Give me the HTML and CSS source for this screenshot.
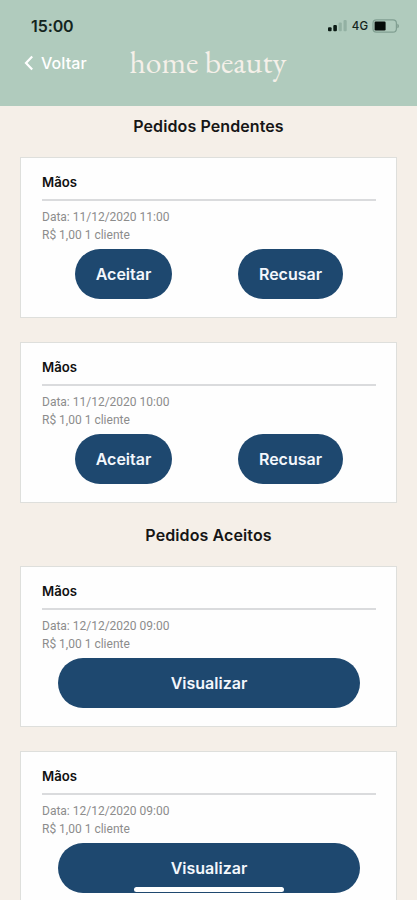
FILE: index.html
```html
<!DOCTYPE html>
<html lang="pt-BR">
<head>
<meta charset="utf-8">
<title>home beauty</title>
<link rel="stylesheet" href="styles.css">
</head>
<body>
<header class="header">
  <div class="status">
    <span class="time">15:00</span>
    <div class="indicators">
      <svg class="signal" width="20" height="12" viewBox="0 0 20 12"><rect x="0" y="7.3" width="3.6" height="3.9" rx="1" fill="#0b1a14"/><rect x="5.3" y="5" width="3.6" height="6.2" rx="1" fill="#0b1a14"/><rect x="10.6" y="2.6" width="3.2" height="8.6" rx="1" fill="#93b1a3"/><rect x="15.5" y="0" width="3.2" height="11.2" rx="1" fill="#93b1a3"/></svg>
      <span class="network">4G</span>
      <svg class="battery" width="28" height="14" viewBox="0 0 28 14"><rect x="1" y=".8" width="23.4" height="12.4" rx="3.4" fill="none" stroke="#809f91" stroke-width="1.2"/><rect x="2.6" y="2.6" width="11" height="8.8" rx="1.2" fill="#050b08"/><path d="M25.5 4.7c1.6.6 1.6 4 0 4.6z" fill="#6f8c7f"/></svg>
    </div>
  </div>
  <div class="nav">
    <a class="back"><svg width="10" height="16" viewBox="0 0 10 16"><path d="M8.2 1.4 2 8l6.2 6.6" fill="none" stroke="#fff" stroke-width="2.2"/></svg><span>Voltar</span></a>
    <span class="brand">home beauty</span>
  </div>
</header>
<main class="content">
  <h2 class="heading">Pedidos Pendentes</h2>
  <article class="card">
    <h3 class="title">Mãos</h3>
    <p class="info"><span class="date">Data: 11/12/2020 11:00</span><br><span class="price">R$ 1,00 1 cliente</span></p>
    <div class="actions"><button class="button accept">Aceitar</button><button class="button refuse">Recusar</button></div>
  </article>
  <article class="card">
    <h3 class="title">Mãos</h3>
    <p class="info"><span class="date">Data: 11/12/2020 10:00</span><br><span class="price">R$ 1,00 1 cliente</span></p>
    <div class="actions"><button class="button accept">Aceitar</button><button class="button refuse">Recusar</button></div>
  </article>
  <h2 class="heading accepted">Pedidos Aceitos</h2>
  <article class="card">
    <h3 class="title">Mãos</h3>
    <p class="info"><span class="date">Data: 12/12/2020 09:00</span><br><span class="price">R$ 1,00 1 cliente</span></p>
    <button class="button view">Visualizar</button>
  </article>
  <article class="card">
    <h3 class="title">Mãos</h3>
    <p class="info"><span class="date">Data: 12/12/2020 09:00</span><br><span class="price">R$ 1,00 1 cliente</span></p>
    <button class="button view">Visualizar</button>
  </article>
</main>
<div class="home-indicator"></div>
</body>
</html>
```
FILE: styles.css
```css
* { box-sizing: border-box; }
html, body { height: 900px; overflow: hidden; }
body { margin: 0; background: #f5efe8; font-family: Inter, "Liberation Sans", sans-serif; color: #161616; }
.header { height: 106px; background: #b0cbbd; padding-top: 14px; }
.status { height: 24px; display: flex; justify-content: space-between; align-items: center; padding: 0 17px 0 31px; }
.time { font-size: 16px; font-weight: 600; color: #14251d; letter-spacing: -.1px; }
.indicators { display: flex; align-items: center; padding-bottom: 1px; }
.network { font-size: 11.5px; font-weight: 500; margin: 0 4px 0 4px; color: #14251d; }
.nav { height: 50px; display: flex; align-items: center; padding-left: 24px; }
.back { display: flex; align-items: center; width: 105.5px; gap: 7px; font-size: 16px; font-weight: 500; color: #fff; letter-spacing: .1px; }
.brand { padding-bottom: 3px; font-family: "EB Garamond", "Liberation Serif", serif; font-size: 31.6px; color: #f5f0e9; white-space: nowrap; }
.heading { margin: 0; height: 51px; padding-top: 10px; font-size: 16px; line-height: 20px; font-weight: 600; text-align: center; letter-spacing: .1px; }
.accepted { height: 41px; padding-top: 0; }
.card { width: 377px; height: 161px; margin: 0 0 24px 20px; padding: 0 20px 0 21px; background: #fefefe; border: 1px solid #dedfdc; }
.card:nth-of-type(2) { margin-bottom: 22px; }
.title { height: 43px; margin: 0; padding-top: 15px; border-bottom: 2px solid #dadbdd; font-size: 13.2px; line-height: 18px; font-weight: 600; color: #101010; }
.info { height: 48px; margin: 0; padding-top: 7px; font-family: Roboto, sans-serif; font-size: 12px; line-height: 18px; color: #8c8c8c; }
.actions { display: flex; justify-content: space-between; padding: 0 33px; }
.button { height: 50px; border: 0; border-radius: 25px; padding: 0; background: #1e486f; color: #f3f7fc; font: 600 16px Inter, sans-serif; }
.accept { width: 97px; }
.refuse { width: 105px; }
.view { display: block; width: 302px; margin-left: 16px; }
.home-indicator { position: absolute; left: 134px; top: 887px; width: 150px; height: 5px; border-radius: 3px; background: #fff; }
```
